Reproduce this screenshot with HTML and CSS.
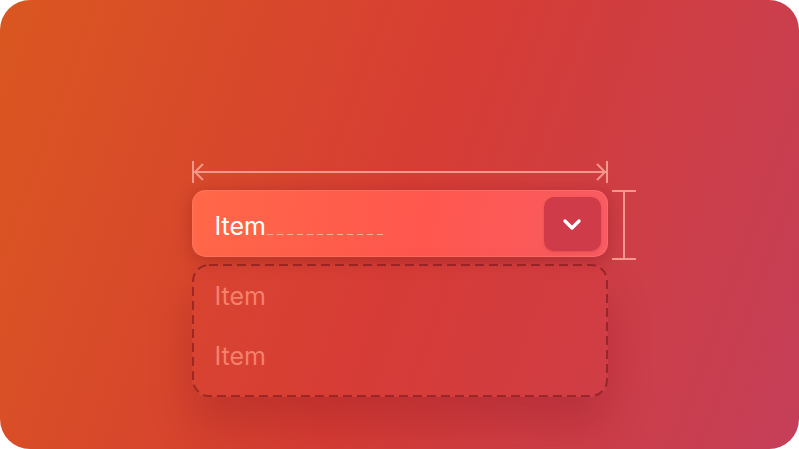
FILE: index.html
```html
<!DOCTYPE html>
<html lang="en">
<head>
    <meta charset="UTF-8">
    <meta name="viewport" content="width=device-width, initial-scale=1.0">
    <title>Select</title>
    <link rel="stylesheet" href="styles.css">
</head>
<body>
    <div class="stage">
        <div class="demo">
            <!-- Lebar kotak select -->
            <svg class="width-guide" xmlns="http://www.w3.org/2000/svg" viewBox="0 0 416 24" width="416" height="24">
                <path d="M1 1v22M415 1v22M2 12h412M11 4l-8 8 8 8M405 4l8 8-8 8" fill="none" stroke="#f5978b" stroke-width="2"/>
            </svg>

            <div class="select">
                <div class="select-label">
                    <span>Item</span>
                    <span class="placeholder-line"></span>
                </div>
                <button class="select-button">
                    <svg xmlns="http://www.w3.org/2000/svg" viewBox="0 0 24 24" width="24" height="24">
                        <path d="M5 9l7 7 7-7" fill="none" stroke="#fff" stroke-width="3.4" stroke-linecap="round" stroke-linejoin="round"/>
                    </svg>
                </button>

                <!-- Tinggi kotak select -->
                <svg class="height-guide" xmlns="http://www.w3.org/2000/svg" viewBox="0 0 24 70" width="24" height="70" preserveAspectRatio="none">
                    <path d="M0 1h24M0 69h24M12 1v68" fill="none" stroke="#f5978b" stroke-width="2"/>
                </svg>
            </div>

            <ul class="menu">
                <li>Item</li>
                <li>Item</li>
                <!-- Garis putus-putus di sekeliling daftar -->
                <svg class="menu-outline" xmlns="http://www.w3.org/2000/svg">
                    <rect x="1" y="1" width="calc(100% - 2px)" height="calc(100% - 2px)" rx="16" fill="none" stroke="rgba(105,20,25,0.55)" stroke-width="2" stroke-dasharray="9 5"/>
                </svg>
            </ul>
        </div>
    </div>
</body>
</html>
```

FILE: styles.css
```css
html {
    background-color: #fff;
}

body {
    margin: 0;
    font-family: "Inter", "Liberation Sans", sans-serif;
}

/* Kartu latar */
.stage {
    width: 799px;
    height: 449px;
    box-sizing: border-box;
    border-radius: 30px;
    overflow: hidden;
    display: flex;
    justify-content: center;
    padding-top: 160px;
    background: linear-gradient(110deg, #da5720 0%, #d63d34 50%, #c53f59 100%);
}

.demo {
    width: 416px;
    display: flex;
    flex-direction: column;
}

.width-guide {
    display: block;
}

/* Kotak select */
.select {
    position: relative;
    margin-top: 6px;
    height: 67px;
    box-sizing: border-box;
    border-radius: 14px;
    padding: 6px 7px 6px 23px;
    display: flex;
    align-items: center;
    justify-content: space-between;
    background: linear-gradient(100deg, #ff6848 0%, #ff574e 55%, #f85b62 100%);
    box-shadow: 0 0 0 1px rgba(255, 140, 120, 0.35) inset, 0 4px 18px rgba(110, 10, 20, 0.3);
}

.select-label {
    display: flex;
    align-items: baseline;
    font-size: 25px;
    color: #fff;
    margin-top: 5px;
}

.placeholder-line {
    width: 118px;
    height: 1.5px;
    margin-left: 1px;
    margin-bottom: 3px;
    background: repeating-linear-gradient(90deg, rgba(255, 205, 195, 0.7) 0 6px, transparent 6px 10px);
}

.select-button {
    width: 57px;
    height: 54px;
    border: none;
    border-radius: 10px;
    padding: 0;
    display: flex;
    align-items: center;
    justify-content: center;
    background-color: #cf3b48;
    box-shadow: 0 1px 3px rgba(90, 0, 10, 0.15);
    cursor: pointer;
}

.select-button svg {
    margin-top: 1px;
}

.height-guide {
    position: absolute;
    left: 420px;
    top: 0;
    height: 70px;
}

/* Daftar pilihan */
.menu {
    position: relative;
    list-style: none;
    margin: 7px 0 0;
    padding: 2px 0 11px 23px;
    border-radius: 16px;
    background-color: rgba(220, 60, 60, 0.25);
    box-shadow: 0 28px 44px rgba(120, 10, 30, 0.24);
}

.menu li {
    font-size: 25px;
    line-height: 60px;
    color: rgba(255, 150, 130, 0.75);
}

.menu-outline {
    position: absolute;
    top: 0;
    left: 0;
    width: 100%;
    height: 100%;
    overflow: visible;
}
```
